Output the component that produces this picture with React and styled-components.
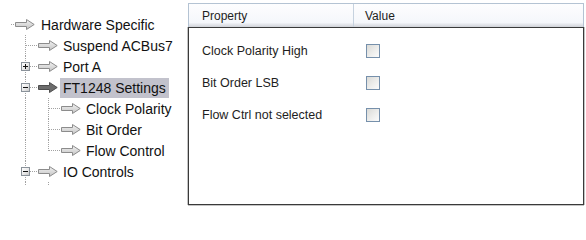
import React from 'react';
import styled, { createGlobalStyle, css } from 'styled-components';

const GlobalStyle = createGlobalStyle`
  html, body {
    margin: 0;
    background: #fff;
    font-family: "Liberation Sans", Arial, sans-serif;
  }
`;

const Page = styled.div`
  display: flex;
  align-items: flex-start;
  width: 586px;
  height: 207px;
  overflow: hidden;
`;

// ---- tree ----
const Tree = styled.div`
  flex: none;
  width: 188px;
  height: 172px;
  padding-top: 14px;
  overflow: hidden;
  font-size: 14px;
  color: #111;
`;

const Row = styled.div`
  display: flex;
  align-items: center;
  height: 21px;
  padding-left: ${p => (p.$root ? '0' : '14px')};
  white-space: nowrap;
`;

const dots = '1px dotted #a2a2a2';

const RootStub = styled.span`
  position: relative;
  flex: none;
  width: 14px;
  height: 21px;

  &::after {
    content: '';
    position: absolute;
    left: 11px;
    top: 10px;
    width: 3px;
    border-top: ${dots};
  }
`;

const Guide = styled.span`
  position: relative;
  flex: none;
  width: 23px;
  height: 21px;

  &::before {
    content: '';
    position: absolute;
    left: 11px;
    top: 0;
    height: 100%;
    border-left: ${p => (p.$on ? dots : 'none')};
  }
`;

const Connector = styled.span`
  position: relative;
  flex: none;
  width: 23px;
  height: 21px;

  &::before {
    content: '';
    position: absolute;
    left: 11px;
    top: 0;
    height: ${p => (p.$last ? '11px' : '100%')};
    border-left: ${dots};
  }

  &::after {
    content: '';
    position: absolute;
    left: 12px;
    top: 10px;
    width: 11px;
    border-top: ${dots};
  }
`;

const Expander = styled.span`
  position: absolute;
  left: 7px;
  top: 6px;
  z-index: 1;
  width: 9px;
  height: 9px;
  box-sizing: border-box;
  border: 1px solid #8a929a;
  background: linear-gradient(135deg, #ffffff 0%, #e6e6e6 60%, #c8c8c8 100%);

  &::before {
    content: '';
    position: absolute;
    left: 1px;
    top: 3px;
    width: 5px;
    height: 1px;
    background: #111;
  }

  ${p => p.$plus && css`
    &::after {
      content: '';
      position: absolute;
      left: 3px;
      top: 1px;
      width: 1px;
      height: 5px;
      background: #111;
    }
  `}
`;

const ArrowWrap = styled.span`
  flex: none;
  display: flex;
  margin-left: 1px;
  width: 20px;
  height: 11px;
`;

const Label = styled.span`
  margin-left: ${p => (p.$root ? '3px' : '2px')};
  padding: 0 3px;
  height: 20px;
  line-height: 20px;
  background: ${p => (p.$selected ? '#c2c2cc' : 'transparent')};
`;

const Arrow = ({ dark }) => (
  <ArrowWrap>
    <svg width="20" height="11" viewBox="0 0 20 11">
      <defs>
        <linearGradient id="arrLight" x1="0" y1="0" x2="0" y2="1">
          <stop offset="0" stopColor="#f2f2f2" />
          <stop offset="1" stopColor="#c4c4c4" />
        </linearGradient>
      </defs>
      <path
        d="M0.5 3.5 H11.5 V0.5 L19.2 5.5 L11.5 10.5 V7.5 H0.5 Z"
        fill={dark ? '#6c6c6c' : 'url(#arrLight)'}
        stroke={dark ? '#4e4e4e' : '#8c8c8c'}
        strokeWidth="1"
      />
    </svg>
  </ArrowWrap>
);

// guides: one flag per ancestor level below the root (true = draw the vertical line)
const treeRows = [
  { label: 'Hardware Specific', root: true },
  { label: 'Suspend ACBus7', guides: [] },
  { label: 'Port A', guides: [], expander: 'plus' },
  { label: 'FT1248 Settings', guides: [], expander: 'minus', selected: true },
  { label: 'Clock Polarity', guides: [true] },
  { label: 'Bit Order', guides: [true] },
  { label: 'Flow Control', guides: [true], last: true },
  { label: 'IO Controls', guides: [], expander: 'minus' },
  { label: '', guides: [true] },
];

const TreeRow = ({ row }) => (
  <Row $root={row.root}>
    {row.root ? (
      <RootStub />
    ) : (
      <>
        {row.guides.map((on, j) => <Guide key={j} $on={on} />)}
        <Connector $last={row.last}>
          {row.expander && <Expander $plus={row.expander === 'plus'} />}
        </Connector>
      </>
    )}
    {row.label && (
      <>
        <Arrow dark={row.selected} />
        <Label $root={row.root} $selected={row.selected}>{row.label}</Label>
      </>
    )}
  </Row>
);

// ---- property grid ----
const Panel = styled.div`
  flex: none;
  width: 396px;
  margin-top: 3px;
  font-size: 12.5px;
  color: #1e1e1e;
`;

const Header = styled.div`
  display: grid;
  grid-template-columns: 165px 1fr;
  height: 24px;
  box-sizing: border-box;
  border: 1px solid #b4c3d3;
  border-bottom: none;
  background: linear-gradient(
    to bottom,
    #fdfdfe 0%,
    #f5f7fb 80%,
    #e6e8ed 88%,
    #cfd2d8 100%
  );
  font-size: 12px;
`;

const HeaderCell = styled.div`
  display: flex;
  align-items: center;
  padding-left: ${p => (p.$first ? '13px' : '11px')};
  border-right: ${p => (p.$first ? '1px solid #c6d2df' : 'none')};
`;

const Body = styled.div`
  height: 178px;
  box-sizing: border-box;
  padding-top: 7px;
  border: 1px solid #3a3a3a;
  box-shadow: 0 1px 0 0 #c4c4c4, -1px 0 0 0 #c4c4c4, 1px 0 0 0 #c4c4c4;
  background: #fff;
`;

const PropRow = styled.div`
  display: grid;
  grid-template-columns: 164px 1fr;
  height: 32px;
  align-items: center;
`;

const PropName = styled.div`
  padding-left: 13px;
`;

const PropValue = styled.div`
  display: flex;
  padding-left: 13px;
`;

const CheckBox = styled.span`
  width: 14px;
  height: 14px;
  box-sizing: border-box;
  border: 1px solid #7690ab;
  background: linear-gradient(135deg, #dadad6 0%, #ececea 50%, #fbfbfb 100%);
`;

const properties = ['Clock Polarity High', 'Bit Order LSB', 'Flow Ctrl not selected'];

const App = () => {
  return (
    <Page>
      <GlobalStyle />
      <Tree>
        {treeRows.map((row, i) => <TreeRow key={i} row={row} />)}
      </Tree>
      <Panel>
        <Header>
          <HeaderCell $first>Property</HeaderCell>
          <HeaderCell>Value</HeaderCell>
        </Header>
        <Body>
          {properties.map(name => (
            <PropRow key={name}>
              <PropName>{name}</PropName>
              <PropValue>
                <CheckBox />
              </PropValue>
            </PropRow>
          ))}
        </Body>
      </Panel>
    </Page>
  );
};

export default App;
